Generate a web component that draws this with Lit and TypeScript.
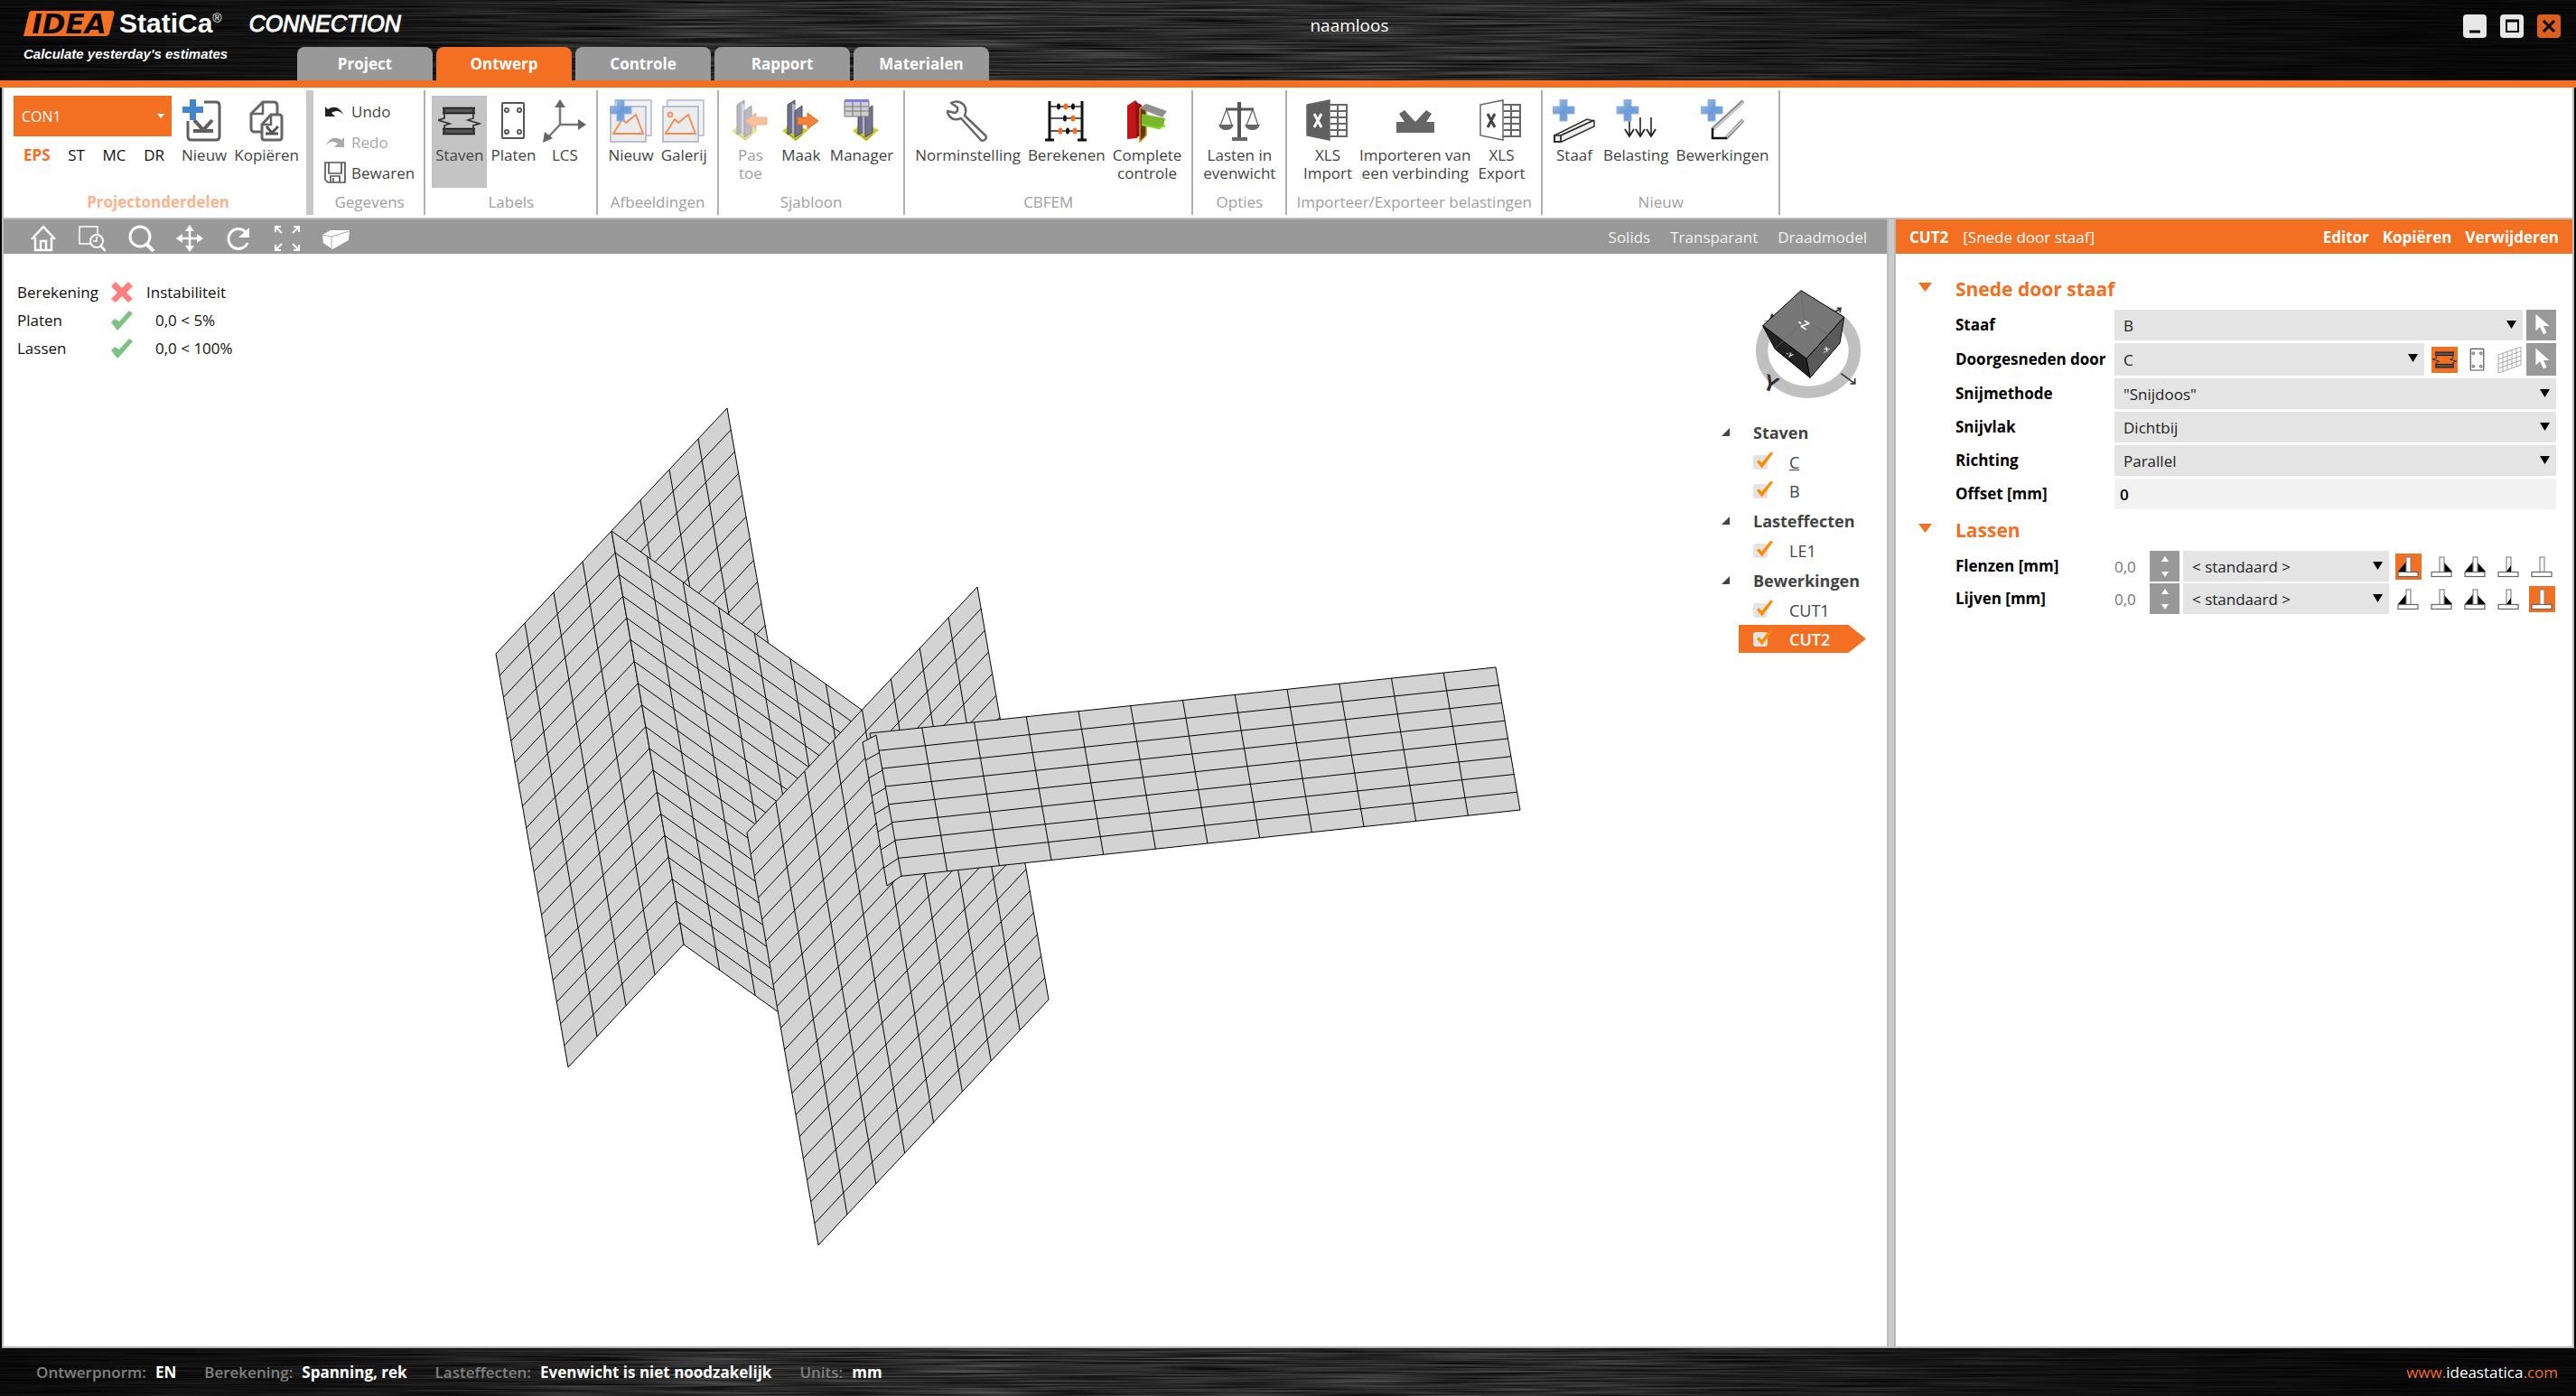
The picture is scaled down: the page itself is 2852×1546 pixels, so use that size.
import { LitElement, html, svg, css, nothing } from "lit";
import type { TemplateResult } from "lit";
import { customElement, property, state } from "lit/decorators.js";
import { classMap } from "lit/directives/class-map.js";

type Pt = [number, number];

/* ---------- icons ---------- */

const plus = (x = 0, y = 0) => svg`<g transform="translate(${x} ${y})">
  <path d="M8 0h8v8h8v8h-8v8h-8v-8h-8v-8h8z" fill="url(#pl)" stroke="#8fb2de" stroke-width="1"/></g>`;

const plusGradient = svg`<defs><linearGradient id="pl" x1="0" y1="0" x2="1" y2="1">
  <stop offset="0" stop-color="#a9c8ec"/><stop offset=".5" stop-color="#6b9bd6"/><stop offset="1" stop-color="#7eaade"/>
</linearGradient></defs>`;

const column = (dx = 0, dy = 0) => svg`<g transform="translate(${dx} ${dy})" stroke-linejoin="round">
  <path d="M0 35l8-6 12 1 9 4-14 12z" fill="#c9ca2c" stroke="#e5e57c"/>
  <path d="M4 37l6 3 5 5 7-6" fill="none" stroke="#8c8d1c"/>
  <path d="M6 6l8-5v34l-8 4z" fill="#6f6f8c" stroke="#4a4a5c"/>
  <path d="M11 4l4 3v32l-4-2z" fill="#b4b4c6"/>
  <path d="M14 13l8-6v30l-8 5z" fill="#75758f" stroke="#4a4a5c"/></g>`;

const xls = (solid: boolean) => svg`
  <path d="M26 6h19v35H26" fill="#fff" stroke="#666" stroke-width="2"/>
  <path d="M27 13h18M27 20h18M27 27h18M27 34h18M35 7v33" stroke="#666" stroke-width="2" fill="none"/>
  <path d="M1 6L26 1v44L1 40z" fill=${solid ? "#5f5f5f" : "#fff"} stroke="#666" stroke-width="1.5"/>
  <path d="M9 16l8 15M17 16l-8 15" stroke=${solid ? "#fff" : "#444"} stroke-width="3" fill="none"/>`;

const picture = (withPlus: boolean) => svg`
  <path d="M6 1h40v39H6z" fill="#f2f3f6" stroke="#b3b7c8" stroke-width="1.5"/>
  <path d="M1 8h39v39H1z" fill="#ececef" stroke="#a9aec2" stroke-width="1.5"/>
  <path d="M4 38l10-16 4 4 11-9 8 21z" fill="none" stroke="#f58a4b" stroke-width="1.8"/>
  ${withPlus ? plus() : svg`<circle cx="9" cy="17" r="2.5" fill="none" stroke="#f58a4b" stroke-width="1.6"/>`}`;

const beamShape = svg`
  <path d="M5 9h36v7H5zM5 32h36v7H5z" fill="#555"/>
  <path d="M5 9.500h36M5 15.500h36M5 32.500h36M5 38.500h36" stroke="#111" stroke-width="1.500"/>
  <path d="M7 9v12l-7 2 13 4-6 2v10M39 9v12l-6 2 13 4-7 2v10" fill="none" stroke="#333" stroke-width="1.700"/>`;

const plateShape = svg`
  <rect x="12" y="4" width="24" height="39" rx="1" fill="#fff" stroke="#555" stroke-width="2"/>
  <g fill="#ddd" stroke="#444" stroke-width="1.500">
  <circle cx="17" cy="12" r="2.200"/><circle cx="31" cy="12" r="2.200"/>
  <circle cx="17" cy="36" r="2.200"/><circle cx="31" cy="36" r="2.200"/></g>`;

const bigIcons: Record<string, TemplateResult> = {
  docNew: svg`<path d="M24 3h13q4 0 4 4v34q0 4-4 4H10q-4 0-4-4V24" fill="none" stroke="#5f5f5f" stroke-width="3"/>
    <path d="M13 23l10 11 10-11" fill="none" stroke="#5f5f5f" stroke-width="4"/>
    <path d="M12 35h22" stroke="#5f5f5f" stroke-width="4"/>
    <path d="M8 0h7v8h8v7h-8v8H8v-8H0V8h8z" fill="#4384cf"/>`,
  docCopy: svg`<path d="M18 36h-7q-4 0-4-4V16L20 3h12q4 0 4 4v9" fill="none" stroke="#666" stroke-width="3"/>
    <path d="M20 4v12H8" fill="none" stroke="#666" stroke-width="2.500"/>
    <path d="M19 28l10-11h9q3 0 3 3v22q0 3-3 3H22q-3 0-3-3z" fill="#fff" stroke="#666" stroke-width="3"/>
    <path d="M29 18v10h-9" fill="none" stroke="#666" stroke-width="2.500"/>
    <path d="M24 30l6 7 7-7M23 38h14" fill="none" stroke="#555" stroke-width="3"/>`,
  staven: beamShape,
  platen: plateShape,
  lcs: svg`<path d="M19 6v22h24M19 28L4 44" fill="none" stroke="#777" stroke-width="2.500"/>
    <path d="M19 0l6 9H13zM48 28l-9 6V22zM0 48l2-12 9 7z" fill="#666"/>`,
  picNew: picture(true),
  gallery: picture(false),
  apply: svg`<g opacity=".5">${column(3)}<path d="M42 20H30v-5L18 24l12 9v-5h12z" fill="#f2833a" stroke="#e06a1e"/></g>`,
  make: svg`${column(3)}<path d="M20 20h11v-5l12 9-12 9v-5H20z" fill="#f2833a" stroke="#e06a1e"/>`,
  manager: svg`${column(14)}<path d="M5 2h27v17H5z" fill="#cfcfcf" stroke="#777"/>
    <path d="M5 8h27M5 13h27M14 3v16M23 3v16" stroke="#777"/><path d="M5 0h27v3H5z" fill="#7d7df0"/>`,
  wrench: svg`<path d="M5 4q8-4 14 2q4 5 1 12l23 22q2 3-1 5q-3 2-5-1L16 21Q7 25 2 17q-1-2-1-4l8 2q4-1 3-6z"
    fill="none" stroke="#666" stroke-width="2.500" stroke-linejoin="round"/>`,
  abacus: svg`<path d="M5 2v43M41 2v43" stroke="#111" stroke-width="3"/><path d="M0 45h10M36 45h10" stroke="#111" stroke-width="3"/>
    <path d="M5 8h36M5 21h36M5 35h36" stroke="#222" stroke-width="1.700"/>
    <g fill="#111"><ellipse cx="15" cy="8" rx="2" ry="3.500"/><ellipse cx="31" cy="8" rx="2" ry="3.500"/><ellipse cx="22" cy="21" rx="2" ry="3.500"/><ellipse cx="25" cy="35" rx="2" ry="3.500"/></g>
    <g fill="#f36f21"><ellipse cx="23" cy="8" rx="2.500" ry="3.500"/><ellipse cx="31" cy="21" rx="2.500" ry="3.500"/><ellipse cx="17" cy="35" rx="2.500" ry="3.500"/><ellipse cx="33" cy="35" rx="2.500" ry="3.500"/></g>`,
  full: svg`<path d="M2 7l9-6 2 2v40l-11 1z" fill="#c4151b"/><path d="M11 3l7 3v34l-6 2z" fill="#8e0f14"/>
    <path d="M16 10l7-4v34l-7 7z" fill="#5c3a14" stroke="#d98a1e" stroke-width="1.500"/>
    <path d="M18 16l26 5-2 9-4 3-20-4z" fill="#7cb52e"/><path d="M18 28l18 4 8-3" fill="none" stroke="#7ae01e" stroke-width="2"/>
    <path d="M16 10l7-5 23 8-5 7z" fill="#8f8f8f"/>`,
  scale: svg`<path d="M24 3v42" stroke="#555" stroke-width="4"/><path d="M9 11h31" stroke="#555" stroke-width="3"/><path d="M16 44h17" stroke="#666" stroke-width="4"/>
    <path d="M10 11L3 29h13zM39 11l-7 18h13z" fill="none" stroke="#666" stroke-width="1.300"/>
    <path d="M1 28h17q-2 6-8.500 6T1 28zM30 28h17q-2 6-8.500 6T30 28z" fill="#666"/>`,
  xlsIn: xls(true),
  connection: svg`<path d="M3 25h9L6 16l6-4 12 13 12-13 6 4-6 9h9v12H3z" fill="#666"/>`,
  xlsOut: xls(false),
  member: svg`<path d="M2 40L38 22l8 2v6L10 47l-8 0z" fill="#eee" stroke="#333" stroke-width="1.500"/>
    <path d="M2 40h7v7H2zM9 40l37-17" fill="none" stroke="#222" stroke-width="1.700"/>${plus()}`,
  load: svg`<path d="M17 20v20M29 20v20M41 20v20" stroke="#222" stroke-width="1.600"/>
    <path d="M12 33l5 8 5-8M24 33l5 8 5-8M36 33l5 8 5-8" fill="none" stroke="#222" stroke-width="1.800"/>${plus(3)}`,
  operation: svg`<path d="M13 33L47 2M28 43l19-20" stroke="#888" stroke-width="4"/><path d="M14 33L47 3M28 42l19-19" stroke="#ddd" stroke-width="1.500"/>
    <path d="M13 32v11h16" fill="none" stroke="#111" stroke-width="2.500"/>${plus()}`,
};

const viewTools: [string, TemplateResult][] = [
  ["Startaanzicht", svg`<path d="M2 16L15 2l13 14M6 14v14h18V14M12 28V18h6v10" fill="none" stroke="#fff" stroke-width="2.500"/>`],
  ["Zoomvenster", svg`<path d="M13 21H1V2h20v9" fill="none" stroke="#fff" stroke-width="1.500"/><circle cx="20" cy="18" r="7" fill="none" stroke="#fff" stroke-width="2"/><path d="M20 13v5h-4" fill="none" stroke="#fff" stroke-width="1.500"/><path d="M24 23l6 6" stroke="#fff" stroke-width="2.500"/>`],
  ["Zoom", svg`<circle cx="14" cy="13" r="11" fill="none" stroke="#fff" stroke-width="3"/><path d="M21 21l8 8" stroke="#fff" stroke-width="4"/>`],
  ["Verschuiven", svg`<path d="M15 4v22M4 15h22" stroke="#fff" stroke-width="2.500"/><path d="M15 0l5 7H10zM15 30l5-7H10zM0 15l7-5v10zM30 15l-7-5v10z" fill="#fff"/>`],
  ["Roteren", svg`<path d="M23 8A11 11 0 1 0 25 20" fill="none" stroke="#fff" stroke-width="3"/><path d="M27 3v11H15z" fill="#fff"/>`],
  ["Alles tonen", svg`<path d="M2 8V2h6M2 2l7 7M22 2h6v6M28 2l-7 7M2 22v6h6M2 28l7-7M28 22v6h-6M28 28l-7-7" fill="none" stroke="#fff" stroke-width="2"/>`],
  ["Perspectief", svg`<path d="M0 11l9-5 21 0-1 11-18 10L1 20z" fill="#fff"/><path d="M0 11l10 2 20-6M10 13v13" fill="none" stroke="#aaa" stroke-width="1"/>`],
];

const cursorIcon = svg`<path d="M9 2v20l5-5 4 9 4-2-4-8h7z" fill="#fff"/>`;

const weldIcon = (kind: number) => svg`<g stroke="#888" stroke-width="1.200" fill="#fff">
  ${kind === 0 || kind === 2 ? svg`<path d="M3 20h9V9z" fill="#000" stroke="none"/>` : nothing}
  ${kind === 1 || kind === 2 ? svg`<path d="M17 20h9L17 10z" fill="#000" stroke="none"/>` : nothing}
  <rect x="12" y="4" width="5" height="17"/>
  ${kind === 3 ? svg`<path d="M12 20h5v-7z" fill="#000" stroke="none"/>` : nothing}
  <rect x="3" y="20.500" width="22" height="5" stroke="#666"/></g>`;

/* ---------- finite element mesh ---------- */

/** A four-sided plate given by its corners a-b (top) and d-c (bottom), split in columns and rows. */
interface Plate { a: Pt; b: Pt; c: Pt; d: Pt; cols: number; rows: number }

const plates: Plate[] = [
  { a: [545, 443], b: [801, 171], c: [881, 628], d: [625, 901], cols: 8, rows: 19 },
  { a: [673, 307], b: [950, 505], c: [1030, 963], d: [753, 765], cols: 7, rows: 19 },
  { a: [823, 641], b: [1078, 369], c: [1157, 826], d: [902, 1098], cols: 8, rows: 19 },
  { a: [959, 531], b: [1652, 458], c: [1679, 616], d: [987, 690], cols: 12, rows: 8 },
  { a: [951, 541], b: [966, 533], c: [994, 689], d: [978, 700], cols: 1, rows: 8 },
];

const mix = (p: Pt, q: Pt, t: number): Pt => [p[0] + (q[0] - p[0]) * t, p[1] + (q[1] - p[1]) * t];

const drawPlate = ({ a, b, c, d, cols, rows }: Plate) => {
  let lines = "";
  for (let i = 1; i < cols; i++) lines += `M${mix(a, b, i / cols)}L${mix(d, c, i / cols)}`;
  for (let j = 1; j < rows; j++) lines += `M${mix(a, d, j / rows)}L${mix(b, c, j / rows)}`;
  return svg`<path d="M${a}L${b}L${c}L${d}Z" fill="#d3d3d3" stroke="#000"/><path d=${lines} fill="none" stroke="#000"/>`;
};

/* ---------- shared styles ---------- */

const base = css`
  :host, *, *::before, *::after { box-sizing: border-box; }
  button, select, input { font: inherit; color: inherit; border: 0; border-radius: 0; margin: 0; padding: 0; background: none; }
  svg { display: block; }
  h2, h3, p { margin: 0; }
`;

/* ---------- brushed metal backdrop ---------- */

@customElement("brushed-metal")
class BrushedMetal extends LitElement {
  static styles = css`
    :host { position: absolute; inset: 0; overflow: hidden; background: #000; }
    svg { display: block; width: 100%; height: 100%; }
    .shade { position: absolute; inset: 0; background: linear-gradient(90deg, rgba(0,0,0,.75) 0, rgba(0,0,0,.55) 12%, rgba(0,0,0,0) 28%, rgba(0,0,0,0) 60%, rgba(0,0,0,.55) 78%, rgba(0,0,0,.8) 96%); }
  `;
  render() {
    return html`<svg aria-hidden="true">
      <filter id="brush" x="0" y="0" width="100%" height="100%" color-interpolation-filters="sRGB">
        <feTurbulence type="fractalNoise" baseFrequency="0.007 0.55" numOctaves="2" seed="8"></feTurbulence>
        <feColorMatrix values="0.45 0 0 0 -0.06  0.45 0 0 0 -0.06  0.45 0 0 0 -0.06  0 0 0 0 1"></feColorMatrix>
      </filter>
      <rect width="100%" height="100%" filter="url(#brush)"></rect>
    </svg><div class="shade"></div>`;
  }
}

/* ---------- title bar ---------- */

@customElement("title-bar")
class TitleBar extends LitElement {
  static styles = [base, css`
    :host { display: block; position: relative; height: 97px; border-bottom: 8px solid #f36f21; color: #fff; }
    .row { position: relative; height: 100%; display: grid; grid-template-columns: 1fr auto 1fr; }
    .left { display: flex; align-items: flex-end; }
    .brand { width: 329px; height: 100%; flex: none; padding: 9px 0 0 26px; font-family: "Liberation Sans", Arial, sans-serif; white-space: nowrap; }
    .marks { display: flex; align-items: center; width: max-content; height: 34px; }
    .idea { position: relative; flex: none; width: 101px; height: 28px; display: flex; align-items: center; justify-content: center; font: italic 700 31px/28px "DejaVu Sans", sans-serif; }
    .idea svg { position: absolute; inset: 0; }
    .idea span { position: relative; color: #080808; }
    .statica { font-weight: 700; font-size: 30px; line-height: 34px; margin-left: 5px; }
    .reg { font-size: 14px; line-height: 14px; align-self: flex-start; margin-top: 4px; }
    .product { font-style: italic; font-size: 25px; line-height: 34px; margin-left: 30px; -webkit-text-stroke: 1px #fff; }
    .motto { font: italic 700 15px/20px "Liberation Sans", Arial, sans-serif; margin-top: 7px; }
    .tabs { display: flex; gap: 4px; }
    .tab { width: 150px; height: 37px; background: #999; color: #fff; border-radius: 8px 8px 0 0; font-weight: 700; font-size: 17px; cursor: pointer; }
    .tab.on { background: #f36f21; }
    .doc { margin-left: 136px; padding-top: 16px; font-size: 19px; line-height: 24px; }
    .win { display: flex; gap: 15px; justify-content: flex-end; padding: 16px 17px 0 0; }
    .win button { width: 26px; height: 26px; border-radius: 4px; background: #e8e8e8; }
    .win .close { background: #dc5f1c; }
  `];
  @state() private active = "Ontwerp";
  render() {
    const tabs = ["Project", "Ontwerp", "Controle", "Rapport", "Materialen"];
    return html`<brushed-metal></brushed-metal>
      <div class="row">
        <div class="left">
          <div class="brand">
            <div class="marks">
              <div class="idea"><svg width="101" height="28" aria-hidden="true"><path d="M9 0h89q3 0 2.500 3L95 25q-1 3-4 3H0L6 3q.500-3 3-3z" fill="#f36f21"/></svg><span>IDEA</span></div>
              <div class="statica">StatiCa</div><div class="reg">®</div>
              <div class="product">CONNECTION</div>
            </div>
            <p class="motto">Calculate yesterday's estimates</p>
          </div>
          <nav class="tabs">${tabs.map(t => html`<button class=${classMap({ tab: true, on: t === this.active })} @click=${() => (this.active = t)}>${t}</button>`)}</nav>
        </div>
        <div class="doc">naamloos</div>
        <div class="win">
          <button aria-label="Minimaliseren"><svg width="26" height="26"><path d="M7 19h12" stroke="#000" stroke-width="3"/></svg></button>
          <button aria-label="Maximaliseren"><svg width="26" height="26"><path d="M7 7h13v12H7z" fill="none" stroke="#000" stroke-width="2"/><path d="M6 7h15" stroke="#000" stroke-width="3"/></svg></button>
          <button class="close" aria-label="Sluiten"><svg width="26" height="26"><path d="M7 7l12 12M19 7L7 19" stroke="#000" stroke-width="3"/></svg></button>
        </div>
      </div>`;
  }
}

/* ---------- ribbon ---------- */

interface Tool { icon: string; label: string; on?: boolean; disabled?: boolean }
interface Group { title: string; tools: Tool[] }

const groups: Group[] = [
  { title: "Labels", tools: [{ icon: "staven", label: "Staven", on: true }, { icon: "platen", label: "Platen" }, { icon: "lcs", label: "LCS" }] },
  { title: "Afbeeldingen", tools: [{ icon: "picNew", label: "Nieuw" }, { icon: "gallery", label: "Galerij" }] },
  { title: "Sjabloon", tools: [{ icon: "apply", label: "Pas\ntoe", disabled: true }, { icon: "make", label: "Maak" }, { icon: "manager", label: "Manager" }] },
  { title: "CBFEM", tools: [{ icon: "wrench", label: "Norminstelling" }, { icon: "abacus", label: "Berekenen" }, { icon: "full", label: "Complete\ncontrole" }] },
  { title: "Opties", tools: [{ icon: "scale", label: "Lasten in\nevenwicht" }] },
  { title: "Importeer/Exporteer belastingen", tools: [{ icon: "xlsIn", label: "XLS\nImport" }, { icon: "connection", label: "Importeren van\neen verbinding" }, { icon: "xlsOut", label: "XLS\nExport" }] },
  { title: "Nieuw", tools: [{ icon: "member", label: "Staaf" }, { icon: "load", label: "Belasting" }, { icon: "operation", label: "Bewerkingen" }] },
];

@customElement("ribbon-bar")
class RibbonBar extends LitElement {
  static styles = [base, css`
    :host { display: flex; height: 144px; padding: 3px 0; background: #fff; color: #444; font-size: 17px; }
    .group { display: flex; flex-direction: column; padding: 6px 7px 0; border-right: 2px solid #b0b0b0; }
    .group.project { padding: 6px 4px 0 11px; border-right: 8px solid #c8c8c8; }
    .tools { display: flex; justify-content: center; height: 102px; }
    .title { margin: 3px 3px 0; line-height: 26px; text-align: center; color: #a0a0a0; white-space: nowrap; }
    .project .title { color: #f8b48e; font-weight: 700; }
    .tool { display: flex; flex-direction: column; align-items: center; min-width: 56px; padding: 4px 4px 0; line-height: 20px; white-space: pre-line; cursor: pointer; }
    .tool svg { flex: none; margin-bottom: 4px; }
    .tool span { white-space: pre; }
    .tool.on { background: #c4c4c4; }
    .tool:disabled { color: #a0a0a0; }
    .item { width: 175px; margin-right: 7px; }
    .pick { position: relative; }
    .pick select { appearance: none; width: 100%; height: 45px; padding: 0 9px; background: #f36f21; color: #fff; font-size: 16px; }
    .pick svg { position: absolute; right: 8px; top: 20px; pointer-events: none; }
    .modes { display: flex; justify-content: space-between; padding: 11px 8px 0 11px; line-height: 20px; color: #111; }
    .modes .on { color: #f36f21; font-weight: 700; }
    .gegevens { padding: 6px 10px 0 12px; }
    .gegevens .tools { flex-direction: column; justify-content: flex-start; padding-top: 1px; }
    .line { display: flex; align-items: center; gap: 6px; height: 34px; }
    .line:disabled { color: #a8a8a8; }
  `];
  private tool(t: Tool) {
    return html`<button class=${classMap({ tool: true, on: !!t.on })} ?disabled=${!!t.disabled}>
      <svg width="48" height="48" viewBox="0 0 48 48" aria-hidden="true">${plusGradient}${bigIcons[t.icon]}</svg><span>${t.label}</span></button>`;
  }
  render() {
    return html`
      <section class="group project">
        <div class="tools">
          <div class="item">
            <div class="pick"><select aria-label="Projectonderdeel"><option>CON1</option></select>
              <svg width="8" height="5" aria-hidden="true"><path d="M0 0h8L4 5z" fill="#fff"/></svg></div>
            <div class="modes"><button class="on">EPS</button><button>ST</button><button>MC</button><button>DR</button></div>
          </div>
          ${this.tool({ icon: "docNew", label: "Nieuw" })}${this.tool({ icon: "docCopy", label: "Kopiëren" })}
        </div>
        <div class="title">Projectonderdelen</div>
      </section>
      <section class="group gegevens">
        <div class="tools">
          <button class="line"><svg width="24" height="24" viewBox="0 0 24 24" aria-hidden="true"><path d="M1 6l3 3Q15 2 22 16q-6-8-14-3l4 4H1z" fill="#222"/></svg>Undo</button>
          <button class="line" disabled><svg width="24" height="24" viewBox="0 0 24 24" aria-hidden="true"><path d="M22 6l-3 3Q8 2 1 16q6-8 14-3l-4 4h11z" fill="#aaa"/></svg>Redo</button>
          <button class="line"><svg width="24" height="24" viewBox="0 0 24 24" aria-hidden="true"><path d="M1 1h22v22H4l-3-3zM5 1v12h14V1M7 23v-7h10v7M10 18v5" fill="none" stroke="#555" stroke-width="1.700"/></svg>Bewaren</button>
        </div>
        <div class="title">Gegevens</div>
      </section>
      ${groups.map(g => html`<section class="group"><div class="tools">${g.tools.map(t => this.tool(t))}</div><div class="title">${g.title}</div></section>`)}`;
  }
}

/* ---------- 3D view ---------- */

interface Branch { title: string; items: string[] }
const branches: Branch[] = [
  { title: "Staven", items: ["C", "B"] },
  { title: "Lasteffecten", items: ["LE1"] },
  { title: "Bewerkingen", items: ["CUT1", "CUT2"] },
];

@customElement("model-view")
class ModelView extends LitElement {
  static styles = [base, css`
    :host { display: flex; flex-direction: column; min-width: 0; background: #fff; }
    .bar { display: flex; align-items: center; height: 38px; padding: 0 22px 0 29px; background: #999; color: #f2f2f2; font-size: 17px; }
    .bar .icons { display: flex; gap: 24px; flex: 1; padding-top: 4px; }
    .bar .modes { display: flex; gap: 22px; }
    .stage { position: relative; flex: 1; display: flex; justify-content: space-between; padding: 27px 23px 0 15px; }
    .mesh { position: absolute; inset: 0; width: 100%; height: 100%; }
    .checks { position: relative; align-self: flex-start; border-collapse: collapse; font-size: 17px; color: #111; }
    .checks td, .checks th { height: 31px; padding: 0; font-weight: 400; text-align: left; white-space: nowrap; }
    .checks th { width: 104px; }
    .checks .mark { width: 39px; }
    .checks .value { padding-left: 10px; }
    .side { position: relative; width: 160px; padding-top: 9px; color: #444; }
    .cube { margin-left: 34px; }
    .side h3 { display: flex; align-items: center; height: 33px; font-size: 18px; font-weight: 700; }
    .side h3 svg { margin-right: 26px; }
    .tree { margin-top: 18px; }
    .leaf { position: relative; display: flex; align-items: center; gap: 24px; height: 31px; margin: 1px 0 1px 19px; padding-left: 16px; font-size: 18px; }
    .leaf.on { background: #f36f21; color: #fff; font-weight: 600; clip-path: polygon(0 0, 86% 0, 100% 50%, 86% 100%, 0 100%); }
    .leaf.main label { text-decoration: underline; }
    .leaf input { position: relative; appearance: none; width: 16px; height: 16px; border-radius: 3px; background: #e3e3e3; }
    .leaf input:checked::after { content: ""; position: absolute; left: 4px; top: -3px; width: 18px; height: 18px; background: #ff8c00; clip-path: polygon(0 61%, 14% 48%, 30% 68%, 86% 0, 100% 8%, 32% 100%); }
  `];
  private mark(ok: boolean) {
    return html`<svg width="24" height="24" aria-label=${ok ? "voldoet" : "voldoet niet"}>${ok
      ? svg`<path d="M0 14l4-4 5 3L20 1l4 3L10 20l-3 3z" fill="#7cc281"/>`
      : svg`<path d="M5 0l7 7 7-7 5 5-7 7 7 7-5 4-7-7-7 7-5-4 7-7-7-7z" fill="#ff7f7f"/>`}</svg>`;
  }
  render() {
    const checks: [string, boolean, string][] = [["Berekening", false, "Instabiliteit"], ["Platen", true, "0,0 < 5%"], ["Lassen", true, "0,0 < 100%"]];
    return html`
      <div class="bar">
        <div class="icons">${viewTools.map(([name, icon]) => html`<button aria-label=${name}><svg width="30" height="30" viewBox="0 0 30 30">${icon}</svg></button>`)}</div>
        <div class="modes"><button>Solids</button><button>Transparant</button><button>Draadmodel</button></div>
      </div>
      <div class="stage">
        <svg class="mesh" viewBox="0 0 2085 1210" preserveAspectRatio="xMinYMin meet" aria-hidden="true">${plates.map(drawPlate)}</svg>
        <table class="checks">${checks.map(([name, ok, value]) => html`<tr><th scope="row">${name}</th><td class="mark">${this.mark(ok)}</td><td class=${ok ? "value" : ""}>${value}</td></tr>`)}</table>
        <div class="side">
          <svg class="cube" width="123" height="127" viewBox="240 80 369 381" aria-hidden="true">
            <ellipse cx="426" cy="294" rx="154" ry="138" fill="none" stroke="#c0c0c0" stroke-width="40"/>
            <path d="M535 370l44 32m-14 2h16v-18M515 165l18-10m-12-2h13l-3 14" fill="none" stroke="#333" stroke-width="5"/>
            <path d="M275 195h20l10-26 10 12v20z" fill="#333"/>
            <text x="278" y="428" font-size="74" font-weight="700" fill="#2e2e2e" font-family="Liberation Sans, sans-serif" transform="rotate(22 300 400)">Y</text>
            <g stroke="#000" stroke-width="3" stroke-linejoin="round">
              <path d="M402 94L545 183L420 321L275 211z" fill="#777"/>
              <path d="M275 211L420 321L432 384L316 289z" fill="#222"/>
              <path d="M420 321L545 183L531 269L432 384z" fill="#5a5a5a"/></g>
            <path d="M402 97l12 94 120 76M414 191l-98 96" fill="none" stroke="#666" stroke-width="2.500"/>
            <g fill="#fff" font-weight="700" font-family="Liberation Sans, sans-serif" text-anchor="middle">
              <text x="410" y="218" font-size="38" transform="rotate(32 410 205)">-Z</text>
              <text x="364" y="315" font-size="22" transform="rotate(38 364 307)">-Y</text>
              <text x="485" y="299" font-size="22" transform="rotate(-46 485 292)">-X</text></g>
          </svg>
          <div class="tree">${branches.map(b => html`
            <h3><svg width="9" height="9" aria-hidden="true"><path d="M9 0v9H0z" fill="#444"/></svg>${b.title}</h3>
            ${b.items.map(i => html`<div class=${classMap({ leaf: true, on: i === "CUT2", main: i === "C" })}>
              <input type="checkbox" id="t-${i}" checked><label for="t-${i}">${i}</label></div>`)}`)}
          </div>
        </div>
      </div>`;
  }
}

/* ---------- drop-down ---------- */

@customElement("drop-down")
class DropDown extends LitElement {
  static styles = [base, css`
    :host { display: block; position: relative; flex: 1; min-width: 0; }
    select { appearance: none; width: 100%; height: 100%; padding: 0 24px 0 10px; background: #e4e4e4; color: #222; cursor: pointer; }
    svg { position: absolute; right: 7px; top: 12px; pointer-events: none; }
  `];
  @property() value = "";
  @property() name = "";
  render() {
    return html`<select aria-label=${this.name}><option>${this.value}</option></select>
      <svg width="11" height="9" aria-hidden="true"><path d="M0 0h11L5.500 9z" fill="#000"/></svg>`;
  }
}

/* ---------- property panel ---------- */

@customElement("property-panel")
class PropertyPanel extends LitElement {
  static styles = [base, css`
    :host { display: block; background: #fff; color: #000; font-size: 17px; }
    .head { display: flex; align-items: center; height: 38px; padding: 0 15px; background: #f36f21; color: #fff; }
    .head b { margin-right: 16px; }
    .head p { flex: 1; }
    .head button { margin-left: 15px; font-weight: 700; }
    .body { padding: 16px 18px 0 25px; }
    h2 { display: flex; align-items: center; height: 46px; color: #f36f21; font-size: 21px; font-weight: 700; }
    h2 svg { margin: 0 26px 4px 0; }
    .rows { display: grid; gap: 3px; }
    .welds { gap: 2px; }
    .row { display: grid; grid-template-columns: 176px minmax(0, 1fr); min-height: 34px; padding-left: 41px; }
    .row.tall { min-height: 36px; }
    .name { align-self: center; font-weight: 700; font-size: 17px; line-height: 24px; white-space: nowrap; }
    .fields { display: flex; gap: 4px; }
    .pick { width: 33px; display: flex; align-items: center; justify-content: center; background: #999; }
    .kinds { display: flex; align-items: center; gap: 8px; }
    .kind { width: 29px; height: 29px; }
    .kind.on { background: #f36f21; }
    .filter { padding-left: 4px; gap: 7px; }
    .text { width: 100%; padding: 0 2px 0 6px; background: #f2f2f2; font-weight: 600; border-radius: 2px; }
    .num { width: 35px; color: #777; }
    .spin { width: 33px; display: flex; flex-direction: column; background: #999; }
    .spin button { flex: 1; display: flex; align-items: center; justify-content: center; }
    .weld { padding-left: 3px; padding-right: 1px; }
  `];
  @property({ attribute: false }) welds = [{ name: "Flenzen [mm]", on: 0 }, { name: "Lijven [mm]", on: 4 }];
  private heading(text: string) {
    return html`<h2><svg width="15" height="10" aria-hidden="true"><path d="M0 0h15L7.500 10z" fill="#f36f21"/></svg>${text}</h2>`;
  }
  private cursor(what: string) {
    return html`<button class="pick" aria-label="Selecteer ${what}"><svg width="30" height="30" viewBox="0 0 32 30">${cursorIcon}</svg></button>`;
  }
  render() {
    const simple: [string, string][] = [["Snijmethode", '"Snijdoos"'], ["Snijvlak", "Dichtbij"], ["Richting", "Parallel"]];
    return html`
      <div class="head"><b>CUT2</b><p>[Snede door staaf]</p><button>Editor</button><button>Kopiëren</button><button>Verwijderen</button></div>
      <div class="body">
        ${this.heading("Snede door staaf")}
        <div class="rows">
          <div class="row"><span class="name">Staaf</span><div class="fields"><drop-down name="Staaf" value="B"></drop-down>${this.cursor("staaf")}</div></div>
          <div class="row tall"><span class="name">Doorgesneden door</span><div class="fields"><drop-down name="Doorgesneden door" value="C"></drop-down>
            <div class="kinds filter">
              <button class="kind on" aria-label="Staaf"><svg width="29" height="29" viewBox="-1 -1 48 50">${beamShape}</svg></button>
              <button class="kind" aria-label="Plaat"><svg width="29" height="29" viewBox="0 0 48 48">${plateShape}</svg></button>
              <button class="kind" aria-label="Net"><svg width="29" height="29" viewBox="0 0 29 29"><path d="M2 9L27 0v20L2 29zM2 14L27 5M2 19l25-9M2 24l25-9M7 7v20M12 5v20M17 4v19M22 2v20" fill="none" stroke="#aaa"/></svg></button>
            </div>${this.cursor("snijdend onderdeel")}</div></div>
          ${simple.map(([n, v]) => html`<div class="row"><span class="name">${n}</span><div class="fields"><drop-down name=${n} value=${v}></drop-down></div></div>`)}
          <div class="row"><label class="name" for="offset">Offset [mm]</label><input class="text" id="offset" value="0"></div>
        </div>
        ${this.heading("Lassen")}
        <div class="rows welds">${this.welds.map((w, r) => html`
          <div class="row"><label class="name" for="weld${r}">${w.name}</label><div class="fields">
            <input class="num" id="weld${r}" value="0,0">
            <div class="spin">
              <button aria-label="Meer"><svg width="8" height="6"><path d="M0 6h8L4 0z" fill="#fff"/></svg></button>
              <button aria-label="Minder"><svg width="8" height="6"><path d="M0 0h8L4 6z" fill="#fff"/></svg></button></div>
            <drop-down name="Materiaal ${w.name}" value="< standaard >"></drop-down>
            <div class="kinds weld">${[0, 1, 2, 3, 4].map(k => html`<button class=${classMap({ kind: true, on: k === w.on })} aria-label="Lastype ${k + 1}">
              <svg width="29" height="29" viewBox="0 0 29 29">${weldIcon(k)}</svg></button>`)}</div>
          </div></div>`)}
        </div>
      </div>`;
  }
}

/* ---------- status bar ---------- */

@customElement("status-bar")
class StatusBar extends LitElement {
  static styles = [base, css`
    :host { display: block; position: relative; height: 53px; font-size: 17px; font-weight: 700; }
    .row { position: relative; display: flex; align-items: center; height: 100%; padding: 0 20px 0 40px; gap: 31px; color: #fff; }
    .pair { display: flex; gap: 10px; }
    .pair span { color: #808080; font-weight: 600; }
    a { margin-left: auto; color: #f36f21; text-decoration: none; font-weight: 400; }
    a span { color: #fff; }
  `];
  render() {
    const pairs: [string, string][] = [["Ontwerpnorm:", "EN"], ["Berekening:", "Spanning, rek"], ["Lasteffecten:", "Evenwicht is niet noodzakelijk"], ["Units:", "mm"]];
    return html`<brushed-metal></brushed-metal><div class="row">
      ${pairs.map(([k, v]) => html`<div class="pair"><span>${k}</span>${v}</div>`)}
      <a href="#ideastatica">www.<span>ideastatica</span>.com</a></div>`;
  }
}

/* ---------- application ---------- */

@customElement("app-root")
class AppRoot extends LitElement {
  static styles = css`
    :host { display: block; font-family: "Open Sans", "Noto Sans", "Segoe UI", sans-serif; background: #000; }
    .app { display: flex; flex-direction: column; min-height: 100vh; }
    .frame { flex: 1; display: flex; flex-direction: column; margin: 0 2px; border: solid #bdbdbd; border-width: 0 2px; }
    .work { flex: 1; display: grid; grid-template-columns: minmax(0, 1fr) 10px minmax(auto, 749px); border: solid #bdbdbd; border-width: 2px 0; }
    .split { background: #cacaca; border: solid #bababa; border-width: 0 2px; }
  `;
  render() {
    return html`<div class="app">
      <title-bar></title-bar>
      <div class="frame">
        <ribbon-bar></ribbon-bar>
        <div class="work"><model-view></model-view><div class="split"></div><property-panel></property-panel></div>
      </div>
      <status-bar></status-bar>
    </div>`;
  }
}
